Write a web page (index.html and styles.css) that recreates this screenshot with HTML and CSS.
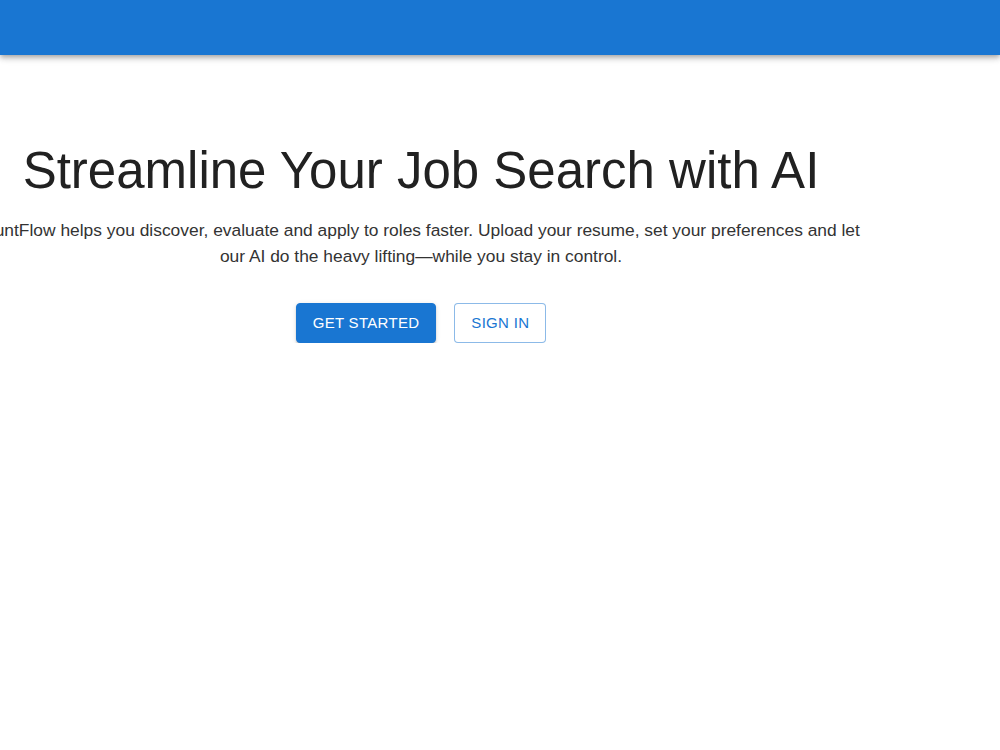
FILE: index.html
```html
<!DOCTYPE html>
<html lang="en">

<head>
    <title>HuntFlow</title>
    <meta charset="utf-8">
    <meta name="viewport" content="width=device-width, initial-scale=1.0">
    <link rel="stylesheet" href="styles.css">
</head>

<body>

    <header class="topbar">
    </header>

    <main class="hero">
        <h1 class="hero-title">Streamline Your Job Search with AI</h1>
        <p class="hero-text">HuntFlow helps you discover, evaluate and apply to roles faster. Upload your resume, set your preferences and let our AI do the heavy lifting—while you stay in control.</p>
        <div class="actions">
            <button class="btn btn-main">Get Started</button>
            <button class="btn btn-line">Sign In</button>
        </div>
    </main>

</body>

</html>
```

FILE: styles.css
```css
body {
    margin: 0;
    background-color: #ffffff;
    font-family: "Liberation Sans", Arial, sans-serif;
    color: rgba(0, 0, 0, 0.87);
    overflow: hidden;
}

.topbar {
    height: 55px;
    background-color: #1976d2;
    box-shadow: 0px 2px 4px -1px rgba(0, 0, 0, 0.2), 0px 4px 5px 0px rgba(0, 0, 0, 0.14), 0px 1px 10px 0px rgba(0, 0, 0, 0.12);
}

.hero {
    width: 842px;
    display: flex;
    flex-direction: column;
    align-items: center;
    text-align: center;
    padding-top: 85px;
}

.hero-title {
    margin: 0;
    font-size: 51px;
    font-weight: 400;
    line-height: 1.2;
    color: #212121;
}

.hero-text {
    width: 890px;
    flex-shrink: 0;
    margin: 16px 0 0;
    font-size: 17.4px;
    line-height: 26px;
    color: #333333;
}

.actions {
    display: flex;
    gap: 18px;
    margin-top: 34px;
}

.btn {
    font-family: inherit;
    font-size: 15px;
    line-height: 24px;
    text-transform: uppercase;
    letter-spacing: 0.02em;
    border-radius: 4px;
    padding: 7px 16px;
    cursor: pointer;
}

.btn-main {
    background-color: #1976d2;
    color: #ffffff;
    border: 1px solid #1976d2;
    box-shadow: 0px 3px 1px -2px rgba(0, 0, 0, 0.2), 0px 2px 2px 0px rgba(0, 0, 0, 0.14), 0px 1px 5px 0px rgba(0, 0, 0, 0.12);
}

.btn-line {
    background-color: #ffffff;
    color: #1976d2;
    border: 1px solid rgba(25, 118, 210, 0.5);
}
```
